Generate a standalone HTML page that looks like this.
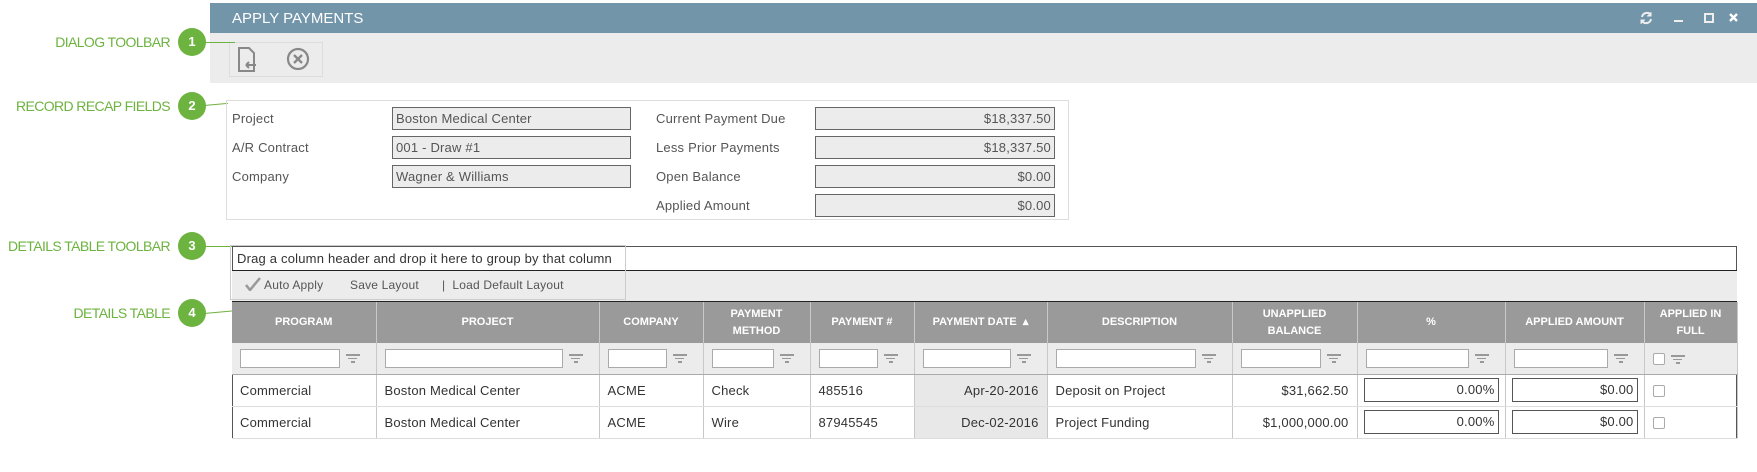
<!DOCTYPE html>
<html><head><meta charset="utf-8"><style>
*{box-sizing:border-box;margin:0;padding:0}
body{width:1757px;height:472px;background:#fff;font-family:"Liberation Sans",sans-serif;position:relative;overflow:hidden;color:#555}
.a{position:absolute}
.call{position:absolute;color:#6db33f;font-size:14px;letter-spacing:-0.6px;text-align:right;width:170px;left:0px;white-space:nowrap}
.circ{position:absolute;width:28px;height:28px;border-radius:50%;background:#6db33f;color:#fff;font-size:13px;font-weight:bold;text-align:center;line-height:28px}
.line{position:absolute;height:1px;background:#6db33f;transform-origin:0 0}
.lbl{position:absolute;font-size:13px;color:#555;letter-spacing:0.2px}
.inp{position:absolute;height:23px;border:1px solid #666;background:#ececec;font-size:13px;color:#555;line-height:21px;padding:0 3px;letter-spacing:0.2px}
table{border-collapse:collapse;table-layout:fixed;position:absolute;left:232px;top:302px;width:1505px}
td,th{border-right:1px solid #c8c8c8;font-size:13px;color:#333;overflow:hidden;white-space:nowrap;letter-spacing:0.2px}
th{background:#9a9a9a;color:#fff;font-size:11px;font-weight:bold;height:41px;line-height:17px;white-space:normal;letter-spacing:0}
tr.f td{background:#ececec;height:31px;border-bottom:1px solid #aaa;padding-left:8px}
tr.r td{height:32px;padding:0 8px;border-bottom:1px solid #ddd}
.fi{display:inline-block;width:calc(100% - 36px);height:19px;border:1px solid #aaa;background:#fff;vertical-align:middle}
.fic{display:inline-block;width:14px;margin-left:6px;vertical-align:middle}
.fic i{display:block;height:1.5px;background:#999;margin:2px auto}
.box{display:inline-block;height:24px;border:1px solid #555;background:#fff;width:100%;text-align:right;padding:0 3px;line-height:22px}
.cb{display:inline-block;width:12px;height:12px;border:1px solid #aaa;border-radius:2px;background:#fff;vertical-align:middle}
</style></head><body>
<div class="a" style="left:210px;top:3px;width:1547px;height:30px;background:#7295aa"></div>
<div class="a" style="left:232px;top:10px;color:#fff;font-size:15px">APPLY PAYMENTS</div>
<svg class="a" style="left:1640px;top:11px" width="110" height="16">
<path d="M2 6a5 5 0 0 1 9-2M11 8a5 5 0 0 1-9 2" fill="none" stroke="#eee" stroke-width="2"/>
<path d="M11 1v4h-4M1 13v-4h4" fill="#eee" stroke="#eee" stroke-width="1"/>
<rect x="34" y="9" width="9" height="2" fill="#eee"/>
<rect x="65" y="3" width="8" height="8" fill="none" stroke="#eee" stroke-width="2"/>
<path d="M90 3l7 7M97 3l-7 7" stroke="#fff" stroke-width="2.4"/>
</svg>
<div class="a" style="left:210px;top:33px;width:1547px;height:50px;background:#ececec"></div>
<div class="a" style="left:229px;top:42px;width:94px;height:35px;border:1px solid #ddd"></div>
<svg class="a" style="left:236px;top:46px" width="80" height="28">
<path d="M3 2h10l5 5v18H3z" fill="none" stroke="#888" stroke-width="2"/>
<path d="M10 19h10M10 19l3-3M10 19l3 3" stroke="#888" stroke-width="2" fill="none"/>
<circle cx="62" cy="13" r="10" fill="none" stroke="#888" stroke-width="2.2"/>
<path d="M58 9l8 8M66 9l-8 8" stroke="#888" stroke-width="2.4"/>
</svg>

<div class="call" style="top:34px">DIALOG TOOLBAR</div>
<div class="circ" style="left:178px;top:28px">1</div>
<div class="line" style="left:204px;top:42px;width:31px"></div>
<div class="call" style="top:98px">RECORD RECAP FIELDS</div>
<div class="circ" style="left:178px;top:92px">2</div>
<div class="line" style="left:204px;top:105px;width:24px;transform:rotate(-5deg)"></div>
<div class="call" style="top:238px">DETAILS TABLE TOOLBAR</div>
<div class="circ" style="left:178px;top:232px">3</div>
<div class="line" style="left:204px;top:246px;width:28px"></div>
<div class="call" style="top:305px">DETAILS TABLE</div>
<div class="circ" style="left:178px;top:299px">4</div>
<div class="line" style="left:204px;top:313px;width:28px;transform:rotate(-5deg)"></div>

<div class="a" style="left:226px;top:100px;width:843px;height:120px;border:1px solid #ddd"></div>
<div class="lbl" style="left:232px;top:111px">Project</div>
<div class="lbl" style="left:232px;top:140px">A/R Contract</div>
<div class="lbl" style="left:232px;top:169px">Company</div>
<div class="inp" style="left:392px;top:107px;width:239px">Boston Medical Center</div>
<div class="inp" style="left:392px;top:136px;width:239px">001 - Draw #1</div>
<div class="inp" style="left:392px;top:165px;width:239px">Wagner &amp; Williams</div>
<div class="lbl" style="left:656px;top:111px">Current Payment Due</div>
<div class="lbl" style="left:656px;top:140px">Less Prior Payments</div>
<div class="lbl" style="left:656px;top:169px">Open Balance</div>
<div class="lbl" style="left:656px;top:198px">Applied Amount</div>
<div class="inp" style="left:815px;top:107px;width:240px;text-align:right">$18,337.50</div>
<div class="inp" style="left:815px;top:136px;width:240px;text-align:right">$18,337.50</div>
<div class="inp" style="left:815px;top:165px;width:240px;text-align:right">$0.00</div>
<div class="inp" style="left:815px;top:194px;width:240px;text-align:right">$0.00</div>

<div class="a" style="left:232px;top:246px;width:1505px;height:193px;border:1px solid #555;border-bottom-color:#888"></div>
<div class="a" style="left:232px;top:270px;width:1505px;height:32px;background:#ececec;border-top:1px solid #222;border-bottom:1px solid #222"></div>
<div class="a" style="left:230px;top:245px;width:396px;height:55px;border:1px solid #ccc"></div>
<div class="lbl" style="left:237px;top:251px;color:#333">Drag a column header and drop it here to group by that column</div>
<svg class="a" style="left:245px;top:277px" width="16" height="14"><path d="M1 8l4 5L15 1" fill="none" stroke="#999" stroke-width="2.5"/></svg>
<div class="lbl" style="left:264px;top:278px;font-size:12px">Auto Apply</div>
<div class="lbl" style="left:350px;top:278px;font-size:12px">Save Layout</div>
<div class="lbl" style="left:442px;top:278px;font-size:12px">|&nbsp; Load Default Layout</div>

<table>
<colgroup><col style="width:144px"><col style="width:223px"><col style="width:104px"><col style="width:107px"><col style="width:104px"><col style="width:133px"><col style="width:185px"><col style="width:125px"><col style="width:148px"><col style="width:139px"><col style="width:93px"></colgroup>
<tr><th>PROGRAM</th><th>PROJECT</th><th>COMPANY</th><th>PAYMENT<br>METHOD</th><th>PAYMENT #</th><th>PAYMENT DATE &nbsp;▴</th><th>DESCRIPTION</th><th>UNAPPLIED<br>BALANCE</th><th>%</th><th>APPLIED AMOUNT</th><th>APPLIED IN<br>FULL</th></tr>
<tr class="f">
<td><span class="fi"></span><span class="fic"><i style="width:14px"></i><i style="width:9px"></i><i style="width:4px"></i></span></td>
<td><span class="fi"></span><span class="fic"><i style="width:14px"></i><i style="width:9px"></i><i style="width:4px"></i></span></td>
<td><span class="fi"></span><span class="fic"><i style="width:14px"></i><i style="width:9px"></i><i style="width:4px"></i></span></td>
<td><span class="fi"></span><span class="fic"><i style="width:14px"></i><i style="width:9px"></i><i style="width:4px"></i></span></td>
<td><span class="fi"></span><span class="fic"><i style="width:14px"></i><i style="width:9px"></i><i style="width:4px"></i></span></td>
<td><span class="fi"></span><span class="fic"><i style="width:14px"></i><i style="width:9px"></i><i style="width:4px"></i></span></td>
<td><span class="fi"></span><span class="fic"><i style="width:14px"></i><i style="width:9px"></i><i style="width:4px"></i></span></td>
<td><span class="fi"></span><span class="fic"><i style="width:14px"></i><i style="width:9px"></i><i style="width:4px"></i></span></td>
<td><span class="fi"></span><span class="fic"><i style="width:14px"></i><i style="width:9px"></i><i style="width:4px"></i></span></td>
<td><span class="fi"></span><span class="fic"><i style="width:14px"></i><i style="width:9px"></i><i style="width:4px"></i></span></td>
<td><span class="cb"></span><span class="fic"><i style="width:14px"></i><i style="width:9px"></i><i style="width:4px"></i></span></td>
</tr>
<tr class="r"><td>Commercial</td><td>Boston Medical Center</td><td>ACME</td><td>Check</td><td>485516</td><td style="background:#e8e8e8;text-align:right">Apr-20-2016</td><td>Deposit on Project</td><td style="text-align:right">$31,662.50</td><td style="padding:0 6px"><span class="box">0.00%</span></td><td style="padding:0 6px"><span class="box">$0.00</span></td><td><span class="cb"></span></td></tr>
<tr class="r"><td>Commercial</td><td>Boston Medical Center</td><td>ACME</td><td>Wire</td><td>87945545</td><td style="background:#e8e8e8;text-align:right">Dec-02-2016</td><td>Project Funding</td><td style="text-align:right">$1,000,000.00</td><td style="padding:0 6px"><span class="box">0.00%</span></td><td style="padding:0 6px"><span class="box">$0.00</span></td><td><span class="cb"></span></td></tr>
</table>
</body></html>
